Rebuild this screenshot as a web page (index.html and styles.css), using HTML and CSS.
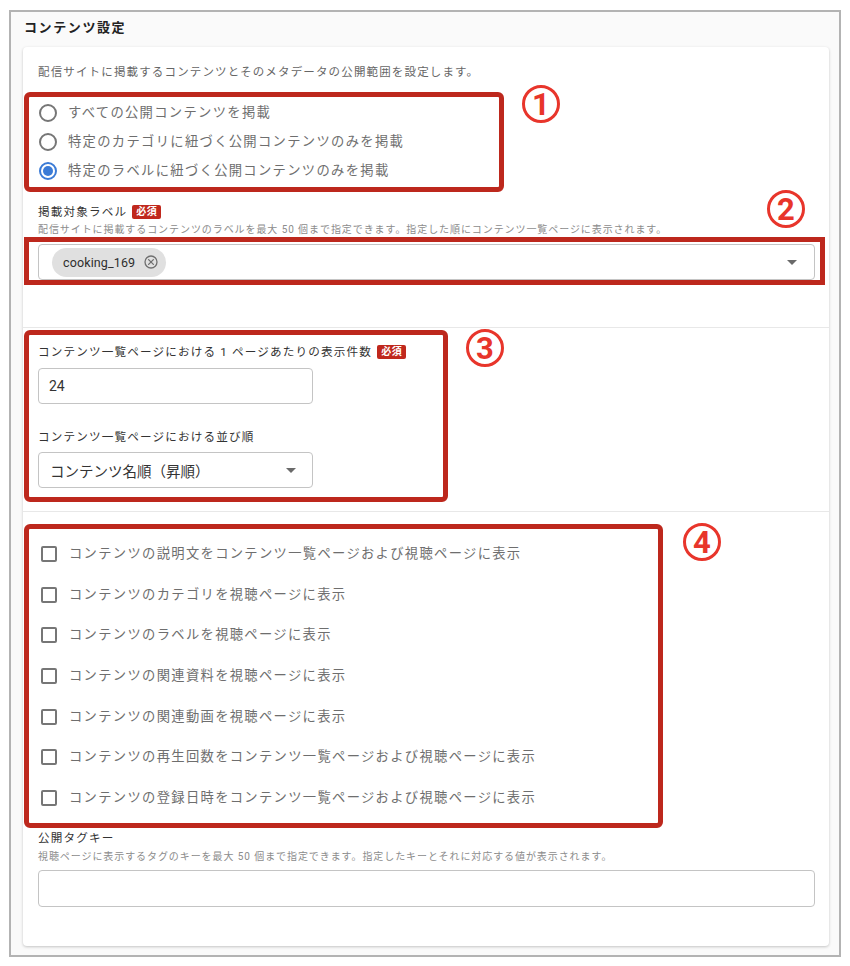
FILE: index.html
```html
<!DOCTYPE html>
<html lang="ja">
<head>
<meta charset="utf-8">
<title>コンテンツ設定</title>
<link rel="stylesheet" href="styles.css">
</head>
<body>
<div class="frame">
  <div class="title">コンテンツ設定</div>
  <div class="card">
    <div class="section section-scope">
      <div class="desc">配信サイトに掲載するコンテンツとそのメタデータの公開範囲を設定します。</div>
      <div class="mark-box box-1">
        <div class="opt-row"><span class="radio"></span><span class="opt-text">すべての公開コンテンツを掲載</span></div>
        <div class="opt-row"><span class="radio"></span><span class="opt-text">特定のカテゴリに紐づく公開コンテンツのみを掲載</span></div>
        <div class="opt-row"><span class="radio is-checked"></span><span class="opt-text">特定のラベルに紐づく公開コンテンツのみを掲載</span></div>
      </div>
      <div class="field-label">掲載対象ラベル<span class="badge">必須</span></div>
      <div class="help">配信サイトに掲載するコンテンツのラベルを最大 50 個まで指定できます。指定した順にコンテンツ一覧ページに表示されます。</div>
      <div class="mark-box box-2">
        <div class="control control-chips">
          <span class="chip"><span class="chip-text">cooking_169</span><svg class="chip-x" width="14" height="14" viewBox="0 0 14 14"><circle cx="7" cy="7" r="6" fill="none" stroke="#6f6f6f" stroke-width="1.3"/><path d="M4.6 4.6 L9.4 9.4 M9.4 4.6 L4.6 9.4" stroke="#6f6f6f" stroke-width="1.3" stroke-linecap="round"/></svg></span>
          <svg class="caret" width="10" height="5" viewBox="0 0 10 5"><path d="M0 0 H10 L5 5 Z" fill="#6a6a6a"/></svg>
        </div>
      </div>
    </div>
    <div class="section section-list">
      <div class="mark-box box-3">
        <div class="field-label">コンテンツ一覧ページにおける 1 ページあたりの表示件数<span class="badge">必須</span></div>
        <div class="control control-short control-input">24</div>
        <div class="field-label label-gap">コンテンツ一覧ページにおける並び順</div>
        <div class="control control-short control-select"><span class="select-text">コンテンツ名順（昇順）</span><svg class="caret" width="10" height="5" viewBox="0 0 10 5"><path d="M0 0 H10 L5 5 Z" fill="#6a6a6a"/></svg></div>
      </div>
    </div>
    <div class="section section-meta">
      <div class="mark-box box-4">
        <div class="opt-row check-row"><span class="checkbox"></span><span class="opt-text">コンテンツの説明文をコンテンツ一覧ページおよび視聴ページに表示</span></div>
        <div class="opt-row check-row"><span class="checkbox"></span><span class="opt-text">コンテンツのカテゴリを視聴ページに表示</span></div>
        <div class="opt-row check-row"><span class="checkbox"></span><span class="opt-text">コンテンツのラベルを視聴ページに表示</span></div>
        <div class="opt-row check-row"><span class="checkbox"></span><span class="opt-text">コンテンツの関連資料を視聴ページに表示</span></div>
        <div class="opt-row check-row"><span class="checkbox"></span><span class="opt-text">コンテンツの関連動画を視聴ページに表示</span></div>
        <div class="opt-row check-row"><span class="checkbox"></span><span class="opt-text">コンテンツの再生回数をコンテンツ一覧ページおよび視聴ページに表示</span></div>
        <div class="opt-row check-row"><span class="checkbox"></span><span class="opt-text">コンテンツの登録日時をコンテンツ一覧ページおよび視聴ページに表示</span></div>
      </div>
      <div class="field-label label-tag">公開タグキー</div>
      <div class="help help-tag">視聴ページに表示するタグのキーを最大 50 個まで指定できます。指定したキーとそれに対応する値が表示されます。</div>
      <div class="control control-tag"></div>
    </div>
    <span class="marker marker-1">1</span>
    <span class="marker marker-2">2</span>
    <span class="marker marker-3">3</span>
    <span class="marker marker-4">4</span>
  </div>
</div>
</body>
</html>
```
FILE: styles.css
```css
* { box-sizing: border-box; }

html, body {
  margin: 0;
  padding: 0;
  background: #ffffff;
}

body {
  font-family: Roboto, "Noto Sans CJK JP", sans-serif;
  letter-spacing: 0.1em;
  color: #333333;
}

.frame {
  margin: 10px 9px 0;
  border: 2px solid #b3b3b3;
  background: #fafafa;
  padding: 6px 10px 9px 12px;
}

.title {
  font-size: 13px;
  font-weight: 700;
  line-height: 20px;
  color: #222222;
  margin: 0 0 9px 1px;
}

.card {
  position: relative;
  background: #ffffff;
  border-radius: 4px;
  box-shadow: 0 1px 3px rgba(0, 0, 0, 0.22);
}

.section {
  padding: 0 14px 0 15px;
  border-bottom: 1px solid #e8e8e8;
}

.section-scope {
  padding-top: 16px;
  padding-bottom: 42px;
}

.section-list {
  padding-top: 2px;
  padding-bottom: 9px;
}

.section-meta {
  padding-top: 12px;
  padding-bottom: 39px;
  border-bottom: none;
}

.desc {
  font-size: 11.5px;
  line-height: 18px;
  letter-spacing: 0.1em;
  color: #666666;
}

.mark-box {
  border: 5px solid #bd281d;
  border-radius: 6px;
  margin-left: -14px;
}

.box-1 {
  width: 480px;
  margin-top: 11px;
  padding: 1px 0 2px 10px;
}

.box-2 {
  margin-right: -10px;
  padding: 2px 5px 0 9px;
  border-radius: 0;
}

.box-3 {
  width: 424px;
  padding: 8px 0 9px 9px;
}

.box-4 {
  width: 639px;
  padding: 4.6px 0 4.5px 12px;
}

.opt-row {
  display: flex;
  align-items: center;
  height: 29px;
}

.check-row {
  height: 40.7px;
}

.radio {
  width: 18px;
  height: 18px;
  flex: none;
  border: 2px solid #767676;
  border-radius: 50%;
  display: flex;
  align-items: center;
  justify-content: center;
}

.radio.is-checked {
  border-color: #3b7bd6;
}

.radio.is-checked::after {
  content: "";
  width: 10px;
  height: 10px;
  border-radius: 50%;
  background: #3b7bd6;
}

.checkbox {
  width: 16px;
  height: 16px;
  flex: none;
  border: 2px solid #767676;
  border-radius: 2px;
}

.opt-text {
  font-size: 13.3px;
  line-height: 18px;
  letter-spacing: 0.099em;
  color: #6e6e6e;
  margin-left: 11px;
  white-space: nowrap;
}

.check-row .opt-text {
  margin-left: 12px;
}

.field-label {
  display: flex;
  align-items: center;
  font-size: 11.6px;
  line-height: 18px;
  letter-spacing: 0.1em;
  color: #333333;
  white-space: nowrap;
}

.section-scope .field-label {
  margin-top: 11px;
}

.label-gap {
  margin-top: 24px;
}

.label-tag {
  margin-top: 1px;
}

.badge {
  display: inline-block;
  margin-left: 5px;
  padding: 0 4px;
  height: 14px;
  line-height: 14px;
  font-size: 10px;
  font-weight: 700;
  letter-spacing: 0.05em;
  color: #ffffff;
  background: #c0281d;
  border-radius: 2px;
}

.help {
  margin-top: 2px;
  font-size: 10px;
  line-height: 14px;
  letter-spacing: 0.092em;
  color: #8c8c8c;
  white-space: nowrap;
}

.help-tag {
  margin-top: 3px;
}

.control {
  border: 1px solid #c4c4c4;
  border-radius: 4px;
  background: #ffffff;
  height: 36px;
  display: flex;
  align-items: center;
  letter-spacing: 0;
}

.control-chips {
  justify-content: space-between;
  padding: 0 17px 0 13px;
}

.chip {
  display: flex;
  align-items: center;
  height: 29px;
  padding: 0 8px 0 11px;
  border-radius: 15px;
  background: #e0e0e0;
}

.chip-text {
  font-size: 12.5px;
  color: #2e2e2e;
  letter-spacing: 0.01em;
}

.chip-x {
  margin-left: 9px;
}

.control-short {
  width: 275px;
}

.control-input {
  margin-top: 7px;
  padding-left: 10px;
  font-size: 14px;
  color: #333333;
}

.control-select {
  margin-top: 6px;
  padding: 0 16px 0 11px;
  justify-content: space-between;
}

.select-text {
  font-size: 14.5px;
  color: #333333;
  letter-spacing: 0;
}

.control-tag {
  margin-top: 6px;
  height: 37px;
}

.marker {
  position: absolute;
  width: 38px;
  height: 38px;
  border: 3px solid #e8352b;
  border-radius: 50%;
  color: #e8352b;
  font-family: Roboto, "Liberation Sans", sans-serif;
  font-weight: 700;
  font-size: 31px;
  line-height: 1;
  letter-spacing: 0;
  display: flex;
  align-items: center;
  justify-content: center;
}

.marker-1 { left: 499px; top: 38px; }
.marker-2 { left: 744px; top: 143px; }
.marker-3 { left: 443px; top: 282px; }
.marker-4 { left: 660px; top: 476px; }
```
